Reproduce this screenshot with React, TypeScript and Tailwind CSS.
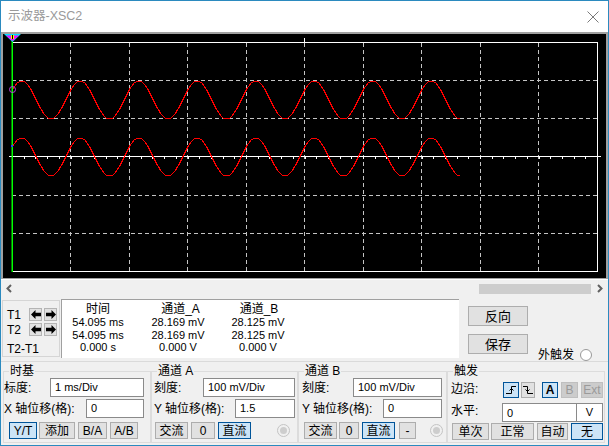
import React from 'react';

const DX = 58.5;

function wave(center: number) {
  const pts: string[] = [];
  for (let x = 12; x <= 459; x++) {
    const y = Math.round(center - 19 * Math.sin((2 * Math.PI * (x - 12)) / DX + 0.58)) + 0.5;
    pts.push(`${x + 0.5},${y}`);
  }
  return pts.join(' ');
}

function Scope() {
  const vx = Array.from({ length: 9 }, (_, i) => Math.floor(12 + DX * (i + 1)) + 0.5);
  const hy = [80, 118, 195, 233].map((y) => y + 0.5);
  const ticks = Array.from({ length: 51 }, (_, i) => Math.round(12 + (DX / 5) * i));
  return (
    <svg width="603" height="244" className="block">
      <g transform="translate(-3,-34)">
        {hy.map((y) => (
          <line key={y} x1={12} x2={597} y1={y} y2={y} stroke="#c4c4c4" strokeDasharray="4 3" />
        ))}
        {vx.map((x) => (
          <line key={x} x1={x} x2={x} y1={43} y2={271} stroke="#c4c4c4" strokeDasharray="4 3" />
        ))}
        <rect x={12} y={42} width={586} height={1} fill="#fff" />
        <rect x={597} y={42} width={1} height={230} fill="#fff" />
        <rect x={12} y={271} width={586} height={1} fill="#fff" />
        <rect x={9} y={156} width={592} height={1} fill="#fff" />
        {ticks.map((x) => (
          <rect key={x} x={x} y={157} width={1} height={2} fill="#fff" />
        ))}
        <rect x={304} y={38} width={1} height={4} fill="#fff" />
        <polyline points={wave(99.5)} fill="none" stroke="#ff0000" strokeWidth={1} shapeRendering="crispEdges" />
        <polyline points={wave(156.5)} fill="none" stroke="#ff0000" strokeWidth={1} shapeRendering="crispEdges" />
        <rect x={11.5} y={37} width={1.5} height={235} fill="#00ff00" />
        <rect x={11} y={145} width={2} height={2} fill="#2040ff" />
        <circle cx={12.5} cy={89.5} r={3} fill="none" stroke="#c040e0" strokeWidth={1} />
        <polygon points="4,34 21,34 12.5,42" fill="#00e0ff" />
        <polygon points="6,35.5 19,35.5 12.5,41" fill="#ff00ff" />
        <rect x={11} y={35} width={3} height={4} fill="#ffff00" />
        <rect x={12} y={35} width={1} height={4} fill="#000" />
      </g>
    </svg>
  );
}

type BtnProps = { className: string; sel?: boolean; dis?: boolean; children: React.ReactNode };

function Btn({ className, sel, dis, children }: BtnProps) {
  const tone = sel
    ? 'bg-[#cce4f7] border-[#005499]'
    : dis
      ? 'bg-[#cccccc] border-[#bfbfbf] text-[#9a9a9a]'
      : 'bg-[#e1e1e1] border-[#adadad]';
  return (
    <div className={`flex shrink-0 items-center justify-center border text-[12px] leading-none ${tone} ${className}`}>
      {children}
    </div>
  );
}

function Field({ className, children }: { className: string; children?: React.ReactNode }) {
  return (
    <div className={`flex shrink-0 items-center border border-[#8a8a8a] bg-white pl-[4px] text-[11px] ${className}`}>
      {children}
    </div>
  );
}

function Radio() {
  return (
    <div className="flex h-[13px] w-[13px] shrink-0 items-center justify-center rounded-full border border-[#c4c4c4]">
      <div className="h-[7px] w-[7px] rounded-full bg-[#cdcdcd]" />
    </div>
  );
}

function Arrow({ dir }: { dir: 'l' | 'r' }) {
  return (
    <div className="flex h-[13px] w-[13px] items-center justify-center border border-[#b4b4b4] bg-[#e1e1e1]">
      <svg width="10" height="9" viewBox="0 0 10 9" className={dir === 'r' ? 'rotate-180' : ''}>
        <polygon points="0,4.5 4.5,0 4.5,2.8 10,2.8 10,6.2 4.5,6.2 4.5,9" fill="#000" />
      </svg>
    </div>
  );
}

function Group({ title, className, children }: { title: React.ReactNode; className: string; children: React.ReactNode }) {
  return (
    <fieldset className={`mt-[3px] border border-[#dcdcdc] ${className}`}>
      <legend className="ml-[5px] px-[1px] text-[12px] leading-[13px]">{title}</legend>
      {children}
    </fieldset>
  );
}

export default function App() {
  return (
    <div className="flex h-[446px] w-[609px] flex-col overflow-hidden border border-[#2b8abf] bg-[#f0f0f0] font-['Liberation_Sans','Noto_Sans_CJK_SC',sans-serif] text-black">
      {/* title bar */}
      <div className="flex h-[31px] shrink-0 items-center justify-between bg-white pl-[7px] pr-[9px]">
        <span className="text-[12.5px] text-[#9a9a9a]">示波器-XSC2</span>
        <svg width="12" height="12" viewBox="0 0 12 12">
          <path d="M0.5 0.5 L11.5 11.5 M11.5 0.5 L0.5 11.5" stroke="#7a7a7a" strokeWidth="1" />
        </svg>
      </div>

      {/* screen */}
      <div className="shrink-0 border-x-2 border-t-2 border-b border-[#a0a0a0] bg-black">
        <Scope />
      </div>
      <div className="h-px shrink-0 bg-white" />

      {/* scroll bar */}
      <div className="flex h-[17px] shrink-0 items-center">
        <svg width="8" height="9" viewBox="0 0 8 9" className="ml-[4px]">
          <polyline points="6,1 2.5,4.5 6,8" fill="none" stroke="#606060" strokeWidth="2" />
        </svg>
        <div className="ml-[466px] h-[10px] w-[112px] bg-[#cdcdcd]" />
        <svg width="8" height="9" viewBox="0 0 8 9" className="ml-[5px]">
          <polyline points="2,1 5.5,4.5 2,8" fill="none" stroke="#606060" strokeWidth="2" />
        </svg>
      </div>

      {/* cursor readout */}
      <div className="flex h-[61px] shrink-0 items-start">
        <div className="ml-px mt-[3px] h-[57px] w-[58px] border border-[#d5d5d5] pl-[4px] pt-[7px] text-[12px]">
          <div className="flex h-[13px] items-center">
            <span className="w-[22px]">T1</span>
            <Arrow dir="l" />
            <div className="w-[2px]" />
            <Arrow dir="r" />
          </div>
          <div className="mt-[2px] flex h-[13px] items-center">
            <span className="w-[22px]">T2</span>
            <Arrow dir="l" />
            <div className="w-[2px]" />
            <Arrow dir="r" />
          </div>
          <div className="mt-[6px] leading-[14px]">T2-T1</div>
        </div>

        <div className="ml-px mt-[2px] h-[59px] w-[398px] border-l border-t border-[#a0a0a0] bg-white pt-[2px]">
          <div className="grid grid-cols-[72px_88px_72px] text-center">
            <div className="text-[12px] leading-[14px]">时间</div>
            <div className="pl-[5px] text-[12px] leading-[14px]">通道_A</div>
            <div className="pl-[2px] text-[12px] leading-[14px]">通道_B</div>
            <div className="text-[11px] leading-[12.5px]">54.095 ms</div>
            <div className="text-[11px] leading-[12.5px]">28.169 mV</div>
            <div className="text-[11px] leading-[12.5px]">28.125 mV</div>
            <div className="text-[11px] leading-[12.5px]">54.095 ms</div>
            <div className="text-[11px] leading-[12.5px]">28.169 mV</div>
            <div className="text-[11px] leading-[12.5px]">28.125 mV</div>
            <div className="text-[11px] leading-[12.5px]">0.000 s</div>
            <div className="text-[11px] leading-[12.5px]">0.000 V</div>
            <div className="text-[11px] leading-[12.5px]">0.000 V</div>
          </div>
        </div>

        <div className="ml-[9px] flex flex-col">
          <Btn className="mt-[9px] h-[20px] w-[60px] text-[13px]">反向</Btn>
          <Btn className="mt-[8px] h-[20px] w-[60px] text-[13px]">保存</Btn>
        </div>

        <div className="ml-[10px] mt-[51px] flex items-center">
          <span className="text-[12px] leading-[14px]">外触发</span>
          <div className="ml-[6px] h-[12px] w-[12px] rounded-full border border-[#999] bg-white" />
        </div>
      </div>

      <div className="mt-[3px] h-px shrink-0 bg-[#dadada]" />

      {/* control groups */}
      <div className="flex shrink-0 pl-[2px] text-[12px]">
        <Group title="时基" className="w-[148px]">
          <div className="flex h-[19px] items-center">
            <span className="w-[46px] shrink-0">标度:</span>
            <Field className="h-[19px] w-[94px]">1 ms/Div</Field>
          </div>
          <div className="mt-[2px] flex h-[19px] items-center">
            <span className="w-[82px] shrink-0">X 轴位移(格):</span>
            <Field className="h-[19px] w-[58px]">0</Field>
          </div>
          <div className="mt-[4px] flex h-[17px] pl-[5px]">
            <Btn sel className="h-[17px] w-[28px]">Y/T</Btn>
            <Btn className="ml-[2px] h-[17px] w-[36px]">添加</Btn>
            <Btn className="ml-[3px] h-[17px] w-[29px]">B/A</Btn>
            <Btn className="ml-[3px] h-[17px] w-[28px]">A/B</Btn>
          </div>
          <div className="h-[3px]" />
        </Group>

        <Group title="通道 A" className="w-[147px]">
          <div className="flex h-[19px] items-center pl-[2px]">
            <span className="w-[49px] shrink-0">刻度:</span>
            <Field className="h-[19px] w-[92px]">100 mV/Div</Field>
          </div>
          <div className="mt-[2px] flex h-[19px] items-center pl-[2px]">
            <span className="w-[81px] shrink-0">Y 轴位移(格):</span>
            <Field className="h-[19px] w-[60px]">1.5</Field>
          </div>
          <div className="mt-[4px] flex h-[17px] items-center pl-[3px]">
            <Btn className="h-[17px] w-[33px]">交流</Btn>
            <Btn className="ml-[3px] h-[17px] w-[24px]">0</Btn>
            <Btn sel className="ml-[3px] h-[17px] w-[33px]">直流</Btn>
            <div className="ml-[26px]">
              <Radio />
            </div>
          </div>
          <div className="h-[3px]" />
        </Group>

        <Group title="通道 B" className="w-[149px]">
          <div className="flex h-[19px] items-center pl-[3px]">
            <span className="w-[51px] shrink-0">刻度:</span>
            <Field className="h-[19px] w-[89px]">100 mV/Div</Field>
          </div>
          <div className="mt-[2px] flex h-[19px] items-center pl-[3px]">
            <span className="w-[81px] shrink-0">Y 轴位移(格):</span>
            <Field className="h-[19px] w-[59px]">0</Field>
          </div>
          <div className="mt-[4px] flex h-[17px] items-center pl-[5px]">
            <Btn className="h-[17px] w-[33px]">交流</Btn>
            <Btn className="ml-[2px] h-[17px] w-[20px]">0</Btn>
            <Btn sel className="ml-[3px] h-[17px] w-[33px]">直流</Btn>
            <Btn className="ml-[4px] h-[17px] w-[17px]">-</Btn>
            <div className="ml-[14px]">
              <Radio />
            </div>
          </div>
          <div className="h-[3px]" />
        </Group>

        <Group title="触发" className="w-[158px]">
          <div className="flex h-[21px] items-center pl-[3px]">
            <span className="w-[52px] shrink-0">边沿:</span>
            <div className="mt-[2px] flex">
              <Btn sel className="h-[16px] w-[16px]">
                <svg width="10" height="10" viewBox="0 0 10 10">
                  <path d="M0 8.5 H5.5 V1.5 H10" fill="none" stroke="#000" strokeWidth="1" />
                  <path d="M3.5 5.5 L5.5 3.5 L7.5 5.5" fill="none" stroke="#000" strokeWidth="1" />
                </svg>
              </Btn>
              <Btn className="ml-[2px] h-[16px] w-[14px]">
                <svg width="10" height="10" viewBox="0 0 10 10">
                  <path d="M0 1.5 H4.5 V8.5 H10" fill="none" stroke="#000" strokeWidth="1" />
                  <path d="M2.5 4.5 L4.5 6.5 L6.5 4.5" fill="none" stroke="#000" strokeWidth="1" />
                </svg>
              </Btn>
              <Btn sel className="ml-[7px] h-[16px] w-[16px] font-bold">A</Btn>
              <Btn dis className="ml-[3px] h-[16px] w-[17px]">B</Btn>
              <Btn dis className="ml-[3px] h-[16px] w-[22px]">Ext</Btn>
            </div>
          </div>
          <div className="mt-[4px] flex h-[19px] items-center pl-[3px]">
            <span className="w-[51px] shrink-0 -translate-y-[2px]">水平:</span>
            <Field className="h-[19px] w-[75px] pt-[2px]">0</Field>
            <div className="flex h-[19px] w-[26px] items-center justify-center border border-l-0 border-[#8a8a8a] bg-white text-[11px]">
              V
            </div>
          </div>
          <div className="mt-[1px] flex h-[17px] items-center pl-[4px]">
            <Btn className="h-[17px] w-[37px]">单次</Btn>
            <Btn className="ml-[2px] h-[17px] w-[43px]">正常</Btn>
            <Btn className="ml-[3px] h-[17px] w-[31px]">自动</Btn>
            <Btn sel className="ml-[3px] h-[17px] w-[32px]">无</Btn>
          </div>
          <div className="h-[2px]" />
        </Group>
      </div>
    </div>
  );
}
